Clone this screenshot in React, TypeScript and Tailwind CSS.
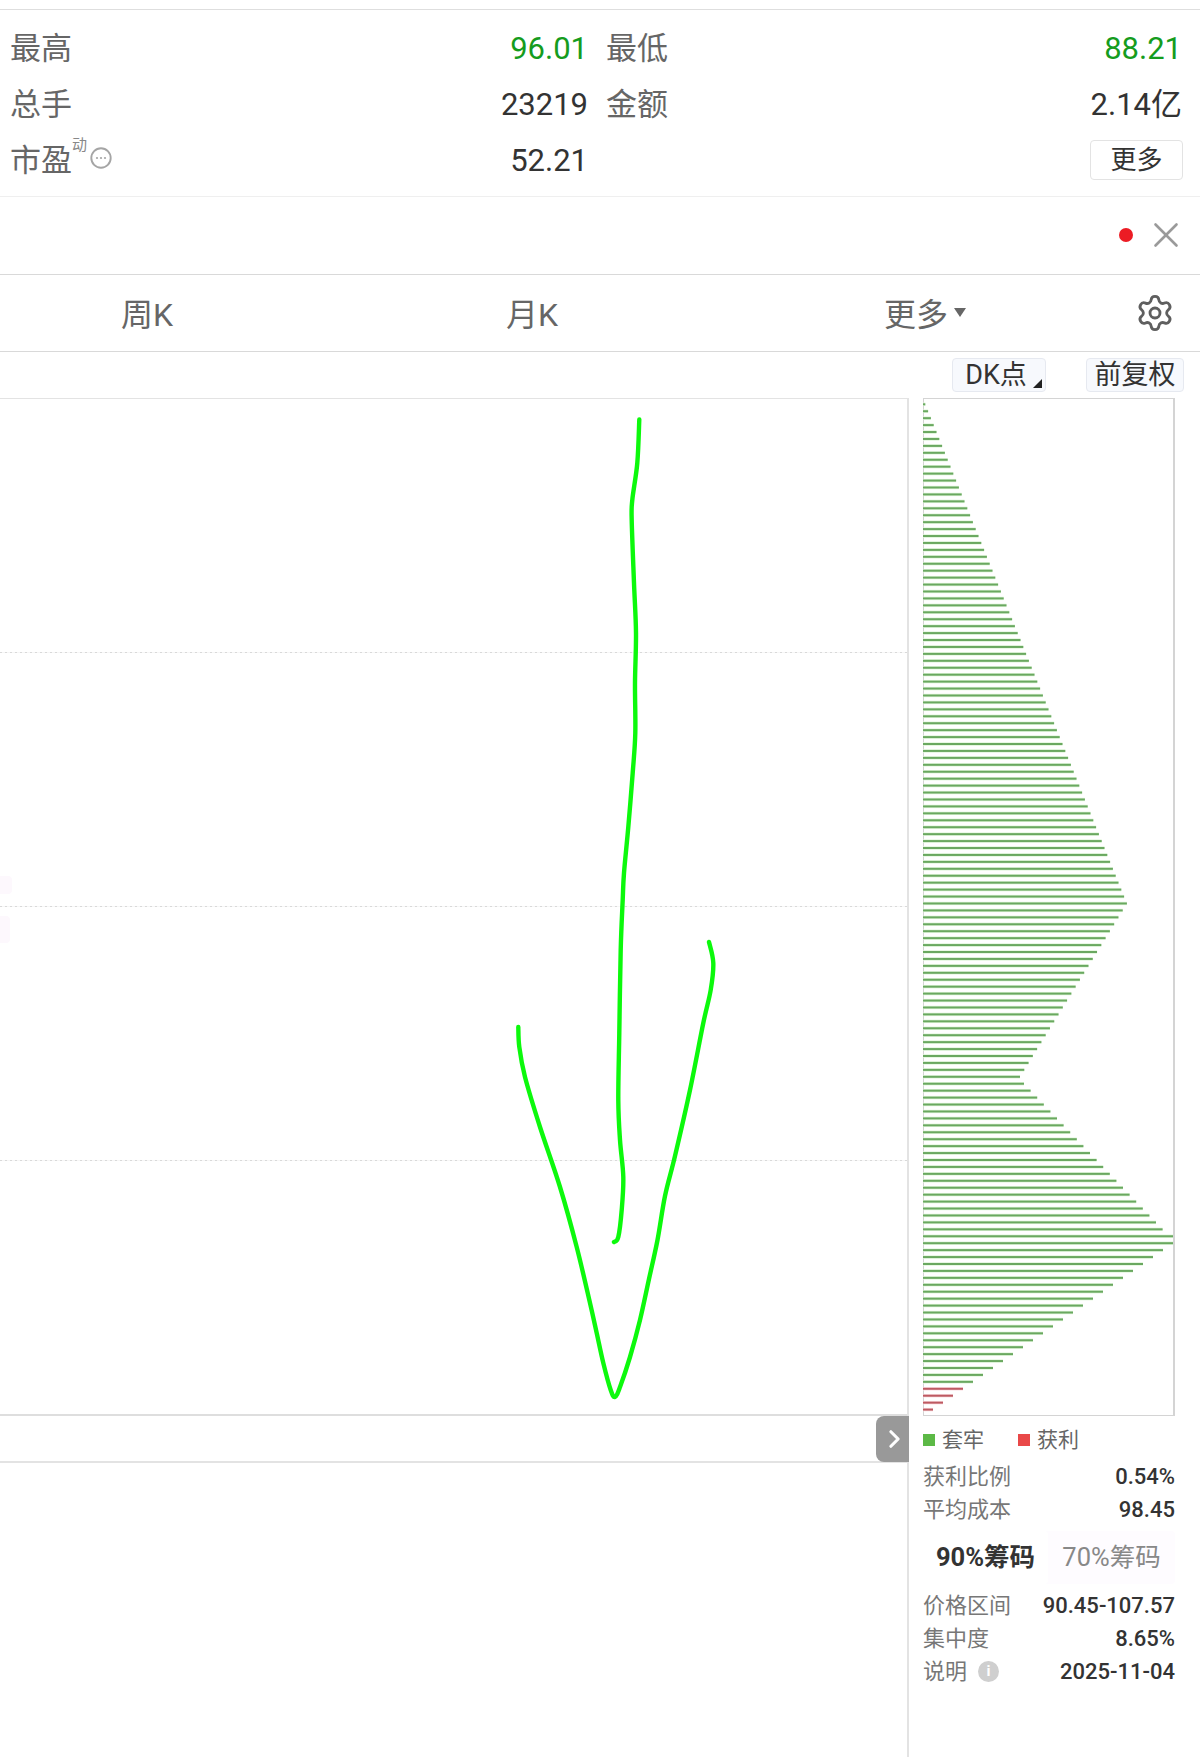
import { Settings, ChevronRight, X } from 'lucide-react'

const FONT = "font-['Roboto','Noto_Sans_CJK_SC',sans-serif]"

// bar lengths of the chip distribution, read off the picture
function barWidth(i: number) {
  if (i <= 72) return 2.3 + 2.8 * i
  if (i <= 97) return 204 - 4.28 * (i - 72)
  if (i <= 119) return 101 + 6.6 * (i - 98)
  if (i === 120) return 251
  if (i === 121) return 250
  return 240 - 10 * (i - 122)
}

const bars = Array.from({ length: 146 }, (_, i) => ({
  y: 5.3 + i * 6.933,
  w: barWidth(i),
  red: i >= 142,
}))

function smooth(pts: number[][]) {
  let d = `M${pts[0][0]} ${pts[0][1]}`
  for (let i = 0; i < pts.length - 1; i++) {
    const p0 = pts[Math.max(i - 1, 0)]
    const p1 = pts[i]
    const p2 = pts[i + 1]
    const p3 = pts[Math.min(i + 2, pts.length - 1)]
    const c1x = p1[0] + (p2[0] - p0[0]) / 6
    const c1y = p1[1] + (p2[1] - p0[1]) / 6
    const c2x = p2[0] - (p3[0] - p1[0]) / 6
    const c2y = p2[1] - (p3[1] - p1[1]) / 6
    d += ` C${c1x} ${c1y} ${c2x} ${c2y} ${p2[0]} ${p2[1]}`
  }
  return d
}

// hand drawn arrow, page coordinates minus the chart origin (y - 399)
const stem = [
  [639.3, 20.5], [637.3, 64], [632.3, 101], [631.7, 121], [634, 184], [636, 234], [635, 284], [635.3, 334],
  [632.7, 374], [628.3, 428], [624, 474], [622.7, 501], [620.7, 551], [619.3, 634], [618.3, 701],
  [620, 741], [623.3, 778], [621.7, 811], [618.3, 838], [614, 843],
]
const head = [
  [709, 543], [713.3, 564], [710.7, 591], [703.3, 624], [690, 691], [675, 757], [665, 797], [657.5, 841],
  [649, 880], [640, 921], [630, 958], [620, 988], [615, 998], [610.7, 991], [603.3, 964], [596.7, 934],
  [590, 904], [576.7, 848], [560, 788], [540, 728], [525, 678], [519.3, 648], [518.3, 628],
]

function StatRow({ label, value, green }: { label: React.ReactNode; value?: string; green?: boolean }) {
  return (
    <div className="flex h-14 items-center justify-between">
      <div className="flex items-center text-[31px] leading-none text-[#666]">{label}</div>
      {value && (
        <div className={`text-[31px] leading-none ${green ? 'text-[#159c1e]' : 'text-[#333]'}`}>
          {value}
        </div>
      )}
    </div>
  )
}

function InfoRow({ label, value, icon }: { label: string; value: string; icon?: boolean }) {
  return (
    <div className="flex h-[33px] items-center justify-between">
      <div className="flex items-center text-[22px] leading-none text-[#777]">
        {label}
        {icon && (
          <span className="ml-[11px] flex h-[21px] w-[21px] items-center justify-center rounded-full bg-[#cfcfcf] text-[15px] font-bold leading-none text-white">
            i
          </span>
        )}
      </div>
      <div className="text-[22px] font-medium leading-none text-[#333]">{value}</div>
    </div>
  )
}

function GridLine() {
  return <div className="h-px bg-[repeating-linear-gradient(90deg,#d9d9d9_0_2px,#f6f6f6_2px_5px)]" />
}

export default function App() {
  return (
    <div className={`h-[1757px] w-[1200px] overflow-hidden bg-white ${FONT}`}>
      <div className="h-[10px] border-b border-[#dedede]" />

      {/* quote table */}
      <div className="grid h-[187px] grid-cols-[578px_576px] gap-x-[18px] border-b border-[#efefef] pl-[10px] pt-[10px]">
        <div>
          <StatRow label="最高" value="96.01" green />
          <StatRow label="总手" value="23219" />
          <StatRow
            label={
              <>
                <span>市盈</span>
                <span className="mb-[30px] w-[18px] text-[15px] leading-none text-[#888]">动</span>
                <svg width="22" height="22" viewBox="0 0 22 22" className="mt-[-4px] ml-0">
                  <circle cx="11" cy="11" r="9.7" fill="none" stroke="#a5a5a5" strokeWidth="1.9" />
                  <circle cx="7" cy="11" r="1.1" fill="#a5a5a5" />
                  <circle cx="11" cy="11" r="1.1" fill="#a5a5a5" />
                  <circle cx="15" cy="11" r="1.1" fill="#a5a5a5" />
                </svg>
              </>
            }
            value="52.21"
          />
        </div>
        <div>
          <StatRow label="最低" value="88.21" green />
          <StatRow label="金额" value="2.14亿" />
          <div className="flex h-14 items-center justify-end">
            <button className="mr-[-1px] flex h-10 w-[93px] items-center justify-center rounded border border-[#e3e3e3] text-[26px] leading-none text-[#333]">
              更多
            </button>
          </div>
        </div>
      </div>

      {/* alert strip */}
      <div className="flex h-[78px] items-center justify-end border-b border-[#d9d9d9] pb-[2px] pr-[13px]">
        <div className="h-[14px] w-[14px] rounded-full bg-[#ec1c24]" />
        <X className="ml-[12px] h-[42px] w-[42px] text-[#9a9a9a]" strokeWidth={1.5} />
      </div>

      {/* period tabs */}
      <div className="flex h-[77px] items-center border-b border-[#d9d9d9] text-[32px] leading-none text-[#666]">
        <div className="w-[294px] pt-[3px] text-center">周K</div>
        <div className="w-[476px] pt-[3px] text-center">月K</div>
        <div className="flex w-[310px] items-center justify-center pt-[3px]">
          更多
          <span className="mb-[4px] ml-[6px] h-0 w-0 border-x-[6px] border-t-[9px] border-x-transparent border-t-[#666]" />
        </div>
        <Settings className="ml-[55px] h-[40px] w-[40px] text-[#5f5f5f]" strokeWidth={1.7} />
      </div>

      <div className="flex">
        {/* kline column */}
        <div className="w-[910px] pt-[46px]">
          <div className="relative flex h-[1360px] flex-col border-t border-r-2 border-[#e3e3e3]">
            <div className="flex h-[1017px] flex-col border-b-2 border-[#dedede]">
              <div className="flex-1" />
              <GridLine />
              <div className="flex-1" />
              <GridLine />
              <div className="flex-1" />
              <GridLine />
              <div className="flex-1" />
            </div>
            <div className="h-[47px] border-b-2 border-[#e3e3e3]" />

            <div className="absolute left-0 top-[477px] h-[18px] w-3 rounded-r bg-[#fdf8fd]" />
            <div className="absolute left-0 top-[517px] h-[27px] w-[10px] rounded-r bg-[#fdf8fd]" />

            <svg className="absolute left-0 top-0" width="908" height="1017" fill="none">
              <path d={smooth(stem)} stroke="#0cf90c" strokeWidth="4.4" strokeLinecap="round" strokeLinejoin="round" />
              <path d={smooth(head)} stroke="#0cf90c" strokeWidth="4.4" strokeLinecap="round" strokeLinejoin="round" />
            </svg>

            <div className="absolute right-[-2px] top-[1017px] flex h-[46px] w-[33px] items-center justify-center rounded-l-lg bg-[#999]">
              <ChevronRight className="ml-[4px] h-[32px] w-[32px] text-white" strokeWidth={2.6} />
            </div>
          </div>
        </div>

        {/* chip distribution column */}
        <div className="flex-1 pl-[14px] pr-[25px]">
          <div className="mr-[-9px] flex h-[46px] justify-end pt-[6px]">
            <div className="relative flex h-[34px] w-[94px] items-center justify-center rounded border border-[#e6e9f0] bg-[#f7f9fd] pr-[6px] text-[27px] leading-none text-[#333]">
              DK点
              <span className="absolute bottom-[3px] right-[3px] h-0 w-0 border-b-[9px] border-l-[9px] border-b-[#222] border-l-transparent" />
            </div>
            <div className="ml-[40px] flex h-[34px] w-[98px] items-center justify-center rounded border border-[#e6e9f0] bg-[#f7f9fd] text-[27px] leading-none text-[#333]">
              前复权
            </div>
          </div>

          <div className="h-[1018px] w-[252px] border border-r-2 border-[#d4d4d4]">
            <svg width="250" height="1016" className="-ml-px">
              {bars.map((b, i) => (
                <g key={i}>
                  <rect x="0" y={b.y - 1.7} width={b.w} height="3.4" fill={b.red ? '#fbdde0' : '#dff6d9'} />
                  <rect x="0" y={b.y - 1} width={b.w} height="2" fill={b.red ? '#bd5a62' : '#6aa860'} />
                </g>
              ))}
            </svg>
          </div>

          <div className="mt-[12px] flex h-[24px] items-center text-[21px] leading-none text-[#666]">
            <span className="h-3 w-3 bg-[#5cb946]" />
            <span className="ml-[7px]">套牢</span>
            <span className="ml-[34px] h-3 w-3 bg-[#e94848]" />
            <span className="ml-[7px]">获利</span>
          </div>

          <div className="mt-[8px] w-[252px]">
            <InfoRow label="获利比例" value="0.54%" />
            <InfoRow label="平均成本" value="98.45" />
          </div>

          <div className="mt-[5px] flex h-[53px] w-[252px] rounded bg-[#fefcff] text-[25.5px] leading-none">
            <div className="flex w-[125px] items-center justify-center rounded bg-white font-bold text-[#333]">90%筹码</div>
            <div className="flex flex-1 items-center justify-center text-[#888]">70%筹码</div>
          </div>

          <div className="mt-[5px] w-[252px]">
            <InfoRow label="价格区间" value="90.45-107.57" />
            <InfoRow label="集中度" value="8.65%" />
            <InfoRow label="说明" value="2025-11-04" icon />
          </div>
        </div>
      </div>
    </div>
  )
}
